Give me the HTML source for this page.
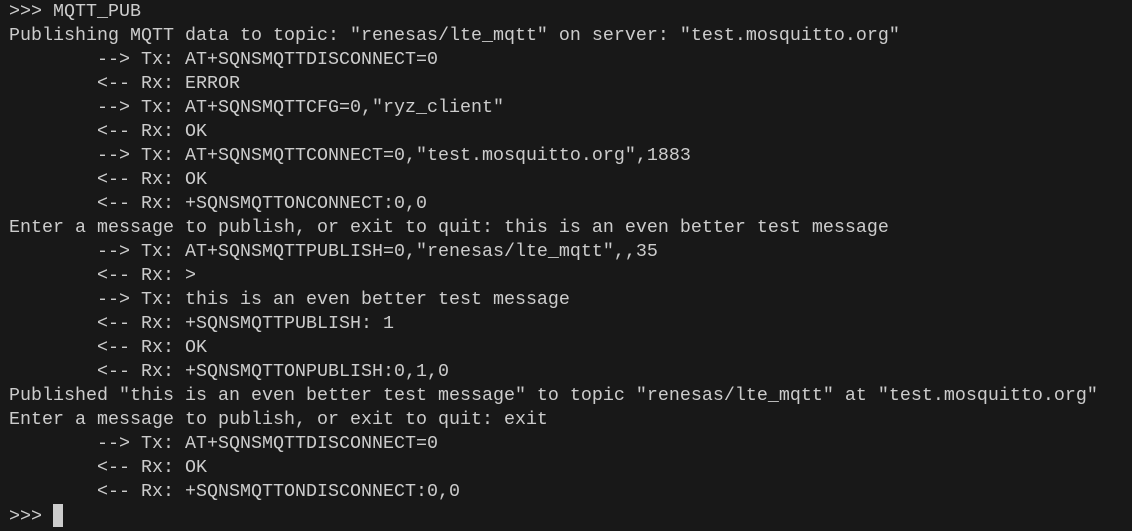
<!DOCTYPE html><html><head><style>
html,body{margin:0;background:#181818;width:1132px;height:531px;overflow:hidden}
pre{margin:0;padding:0 0 0 9px;font-family:"Liberation Mono",monospace;font-size:18.33px;line-height:24px;color:#cccccc;white-space:pre}
.c{display:inline-block;width:10px;height:23px;background:#cccccc;vertical-align:-6px}
</style></head><body><pre>&gt;&gt;&gt; MQTT_PUB
Publishing MQTT data to topic: "renesas/lte_mqtt" on server: "test.mosquitto.org"
        --&gt; Tx: AT+SQNSMQTTDISCONNECT=0
        &lt;-- Rx: ERROR
        --&gt; Tx: AT+SQNSMQTTCFG=0,"ryz_client"
        &lt;-- Rx: OK
        --&gt; Tx: AT+SQNSMQTTCONNECT=0,"test.mosquitto.org",1883
        &lt;-- Rx: OK
        &lt;-- Rx: +SQNSMQTTONCONNECT:0,0
Enter a message to publish, or exit to quit: this is an even better test message
        --&gt; Tx: AT+SQNSMQTTPUBLISH=0,"renesas/lte_mqtt",,35
        &lt;-- Rx: &gt;
        --&gt; Tx: this is an even better test message
        &lt;-- Rx: +SQNSMQTTPUBLISH: 1
        &lt;-- Rx: OK
        &lt;-- Rx: +SQNSMQTTONPUBLISH:0,1,0
Published "this is an even better test message" to topic "renesas/lte_mqtt" at "test.mosquitto.org"
Enter a message to publish, or exit to quit: exit
        --&gt; Tx: AT+SQNSMQTTDISCONNECT=0
        &lt;-- Rx: OK
        &lt;-- Rx: +SQNSMQTTONDISCONNECT:0,0
&gt;&gt;&gt; <span class="c"></span></pre></body></html>
